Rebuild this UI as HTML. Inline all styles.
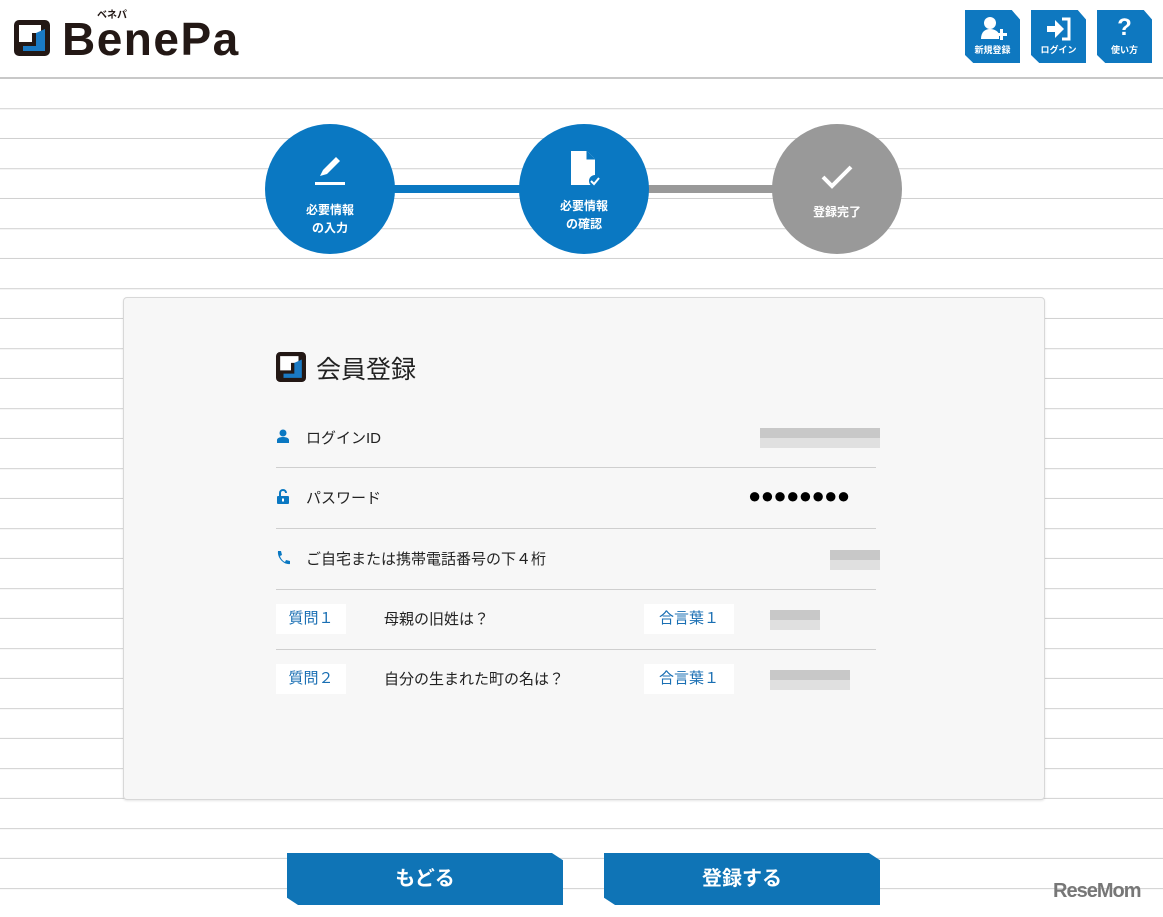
<!DOCTYPE html>
<html><head><meta charset="utf-8"><style>
*{margin:0;padding:0;box-sizing:border-box}
body{width:1163px;height:917px;overflow:hidden;position:relative;font-family:"Liberation Sans","Noto Sans CJK JP",sans-serif;background:#fff;
background-image:repeating-linear-gradient(to bottom,transparent 0,transparent 29px,#d0d0d0 29px,#d0d0d0 30px);background-position:0 79px;}
.hdr{position:absolute;left:0;top:0;width:1163px;height:79px;background:#fff;border-bottom:2px solid #c8c8c8}
.abs{position:absolute}
.nb{position:absolute;top:10px;width:55px;height:53px;background:#0e78c0;color:#fff;font-size:9px;font-weight:bold;text-align:center;clip-path:polygon(0 0,85% 0,100% 18%,100% 100%,15% 100%,0 85%)}
.circ{position:absolute;width:130px;height:130px;border-radius:50%;background:#0a78c2;color:#fff;font-size:12px;font-weight:bold;text-align:center;line-height:18px}
.card{position:absolute;left:123px;top:297px;width:922px;height:503px;background:#f7f7f7;border:1px solid #d8d8d8;border-radius:4px;box-shadow:0 1px 2px rgba(0,0,0,.1)}
.row{position:absolute;left:276px;width:600px;border-bottom:1px solid #cfcfcf;height:61px}
.lbl{position:absolute;font-size:15px;color:#222}
.tag{position:absolute;background:#fff;color:#1a6fb3;font-size:15px;width:70px;height:30px;line-height:30px;text-align:center}
.blur{position:absolute;height:20px;background:linear-gradient(to bottom,#c8c8c8 50%,#e0e0e0 50%)}
.btn{position:absolute;top:853px;width:276px;height:52px;background:#0f74b6;color:#fff;font-size:20px;font-weight:bold;text-align:center;line-height:52px;clip-path:polygon(0 0,96% 0,100% 14%,100% 100%,4% 100%,0 86%)}
</style></head><body>
<div class="hdr"></div>
<svg class="abs" style="left:14px;top:20px" width="36" height="36" viewBox="0 0 36 36"><rect x="0" y="0" width="36" height="36" rx="5" fill="#231815"/><path d="M5 5h22v8h-9v9h-13z" fill="#fff"/><path d="M31 9v22h-22v-5h13v-13z" fill="#1a7ac4"/></svg>
<div class="abs" style="left:62px;top:13px;font-size:46px;font-weight:bold;color:#231815;letter-spacing:1.5px;line-height:52px">BenePa</div>
<div class="abs" style="left:97px;top:6px;font-size:10px;font-weight:bold;color:#231815">ベネパ</div>
<div class="nb" style="left:965px"><svg width="30" height="28" viewBox="0 0 30 28" style="margin-top:5px"><circle cx="12" cy="8" r="6" fill="#fff"/><path d="M3 24c0-7 4-10 9-10s9 3 9 6v4z" fill="#fff"/><path d="M22 14h3v4h4v3h-4v4h-3v-4h-4v-3h4z" fill="#fff"/></svg><div style="margin-top:-2px">新規登録</div></div>
<div class="nb" style="left:1031px"><svg width="30" height="28" viewBox="0 0 30 28" style="margin-top:5px"><path d="M3 11h8v-6l9 9-9 9v-6h-8z" fill="#fff"/><path d="M18 4h7v20h-7" stroke="#fff" stroke-width="3" fill="none"/></svg><div style="margin-top:-2px">ログイン</div></div>
<div class="nb" style="left:1097px"><div style="font-size:24px;line-height:30px;margin-top:3px">?</div><div>使い方</div></div>

<div class="abs" style="left:390px;top:185px;width:135px;height:8px;background:#0a78c2"></div>
<div class="abs" style="left:645px;top:185px;width:135px;height:8px;background:#999"></div>
<div class="circ" style="left:265px;top:124px"><svg width="40" height="40" viewBox="0 0 40 40" style="margin-top:26px"><path d="M10 26l3-6 13-13 4 4-13 13z" fill="#fff"/><rect x="5" y="32" width="30" height="3" fill="#fff"/></svg><div style="margin-top:6px">必要情報<br>の入力</div></div>
<div class="circ" style="left:519px;top:124px"><svg width="40" height="40" viewBox="0 0 40 40" style="margin-top:24px"><path d="M7 3h16l8 8v26h-24z" fill="#fff"/><path d="M23 3v8h8" fill="#0a78c2" stroke="#0a78c2"/><circle cx="31" cy="33" r="6" fill="#0a78c2"/><path d="M27 33l3 3 5-6" stroke="#fff" stroke-width="2" fill="none"/></svg><div style="margin-top:4px">必要情報<br>の確認</div></div>
<div class="circ" style="left:772px;top:124px;background:#999"><svg width="36" height="30" viewBox="0 0 36 30" style="margin-top:38px"><path d="M4 15l9 9 19-19" stroke="#fff" stroke-width="4" fill="none"/></svg><div style="margin-top:6px">登録完了</div></div>

<div class="card"></div>
<svg class="abs" style="left:276px;top:352px" width="30" height="30" viewBox="0 0 36 36"><rect x="0" y="0" width="36" height="36" rx="5" fill="#231815"/><path d="M5 5h22v8h-9v9h-13z" fill="#fff"/><path d="M31 9v22h-22v-5h13v-13z" fill="#1a7ac4"/></svg>
<div class="abs" style="left:316px;top:350px;font-size:25px;color:#222">会員登録</div>

<div class="row" style="top:407px"></div>
<svg class="abs" style="left:277px;top:429px" width="12" height="14" viewBox="0 0 12 14"><circle cx="6" cy="4" r="3.5" fill="#0a78c2"/><path d="M0 14v-3c0-2 3-3 6-3s6 1 6 3v3z" fill="#0a78c2"/></svg>
<div class="lbl" style="left:306px;top:427px">ログインID</div>
<div class="blur" style="left:760px;top:428px;width:120px"></div>

<div class="row" style="top:468px"></div>
<svg class="abs" style="left:277px;top:489px" width="12" height="15" viewBox="0 0 12 15"><path d="M3 7v-3a3 3 0 0 1 6 0" stroke="#0a78c2" stroke-width="2" fill="none"/><rect x="0" y="7" width="12" height="8" rx="1" fill="#0a78c2"/><rect x="5" y="9.5" width="2" height="3" fill="#fff"/></svg>
<div class="lbl" style="left:306px;top:487px">パスワード</div>
<div class="abs" style="left:748px;top:483px;font-size:22px;color:#000;letter-spacing:-0.6px">●●●●●●●●</div>

<div class="row" style="top:529px"></div>
<svg class="abs" style="left:276px;top:550px" width="14" height="15" viewBox="0 0 14 15"><path d="M2 1l3 0 1 4-2 1c1 3 3 5 5 6l1-2 4 1v3c-6 1-13-6-12-13z" fill="#0a78c2"/></svg>
<div class="lbl" style="left:306px;top:548px">ご自宅または携帯電話番号の下４桁</div>
<div class="blur" style="left:830px;top:550px;width:50px"></div>

<div class="row" style="top:590px;height:60px"></div>
<div class="tag" style="left:276px;top:604px">質問１</div>
<div class="lbl" style="left:384px;top:608px">母親の旧姓は？</div>
<div class="tag" style="left:644px;top:604px;width:90px">合言葉１</div>
<div class="blur" style="left:770px;top:610px;width:50px"></div>

<div class="tag" style="left:276px;top:664px">質問２</div>
<div class="lbl" style="left:384px;top:668px">自分の生まれた町の名は？</div>
<div class="tag" style="left:644px;top:664px;width:90px">合言葉１</div>
<div class="blur" style="left:770px;top:670px;width:80px"></div>

<div class="btn" style="left:287px">もどる</div>
<div class="btn" style="left:604px">登録する</div>
<div class="abs" style="left:1053px;top:880px;font-size:20px;font-weight:bold;color:#777;letter-spacing:-1px">ReseMom</div>
</body></html>
